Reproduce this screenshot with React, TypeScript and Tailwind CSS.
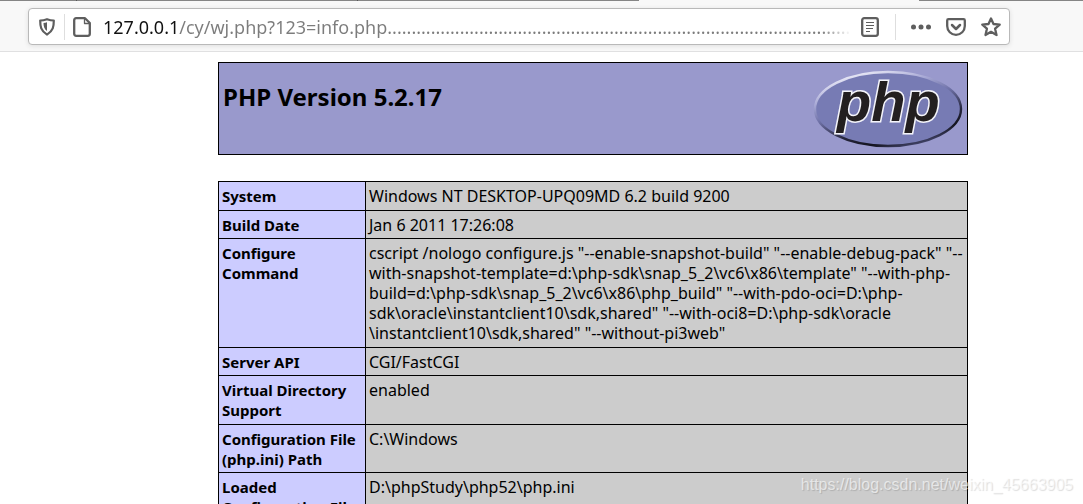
const rows: [string, string][] = [
  ["System", "Windows NT DESKTOP-UPQ09MD 6.2 build 9200"],
  ["Build Date", "Jan 6 2011 17:26:08"],
  [
    "Configure\nCommand",
    'cscript /nologo configure.js "--enable-snapshot-build" "--enable-debug-pack" "--\nwith-snapshot-template=d:\\php-sdk\\snap_5_2\\vc6\\x86\\template" "--with-php-\nbuild=d:\\php-sdk\\snap_5_2\\vc6\\x86\\php_build" "--with-pdo-oci=D:\\php-\nsdk\\oracle\\instantclient10\\sdk,shared" "--with-oci8=D:\\php-sdk\\oracle\n\\instantclient10\\sdk,shared" "--without-pi3web"',
  ],
  ["Server API", "CGI/FastCGI"],
  ["Virtual Directory\nSupport", "enabled"],
  ["Configuration File\n(php.ini) Path", "C:\\Windows"],
  ["Loaded\nConfiguration File", "D:\\phpStudy\\php52\\php.ini"],
];

const url = "127.0.0.1/cy/wj.php?123=info.php" + ".".repeat(160);

function PhpLogo() {
  return (
    <svg width="150" height="80" viewBox="0 0 150 80" role="img" aria-label="PHP logo">
      <defs>
        <linearGradient id="rim" x1="0.25" y1="0" x2="0.75" y2="1">
          <stop offset="0" stopColor="#f0f0fa" />
          <stop offset="0.25" stopColor="#a9aad6" />
          <stop offset="0.45" stopColor="#6f72a8" />
          <stop offset="0.7" stopColor="#26263c" />
          <stop offset="0.85" stopColor="#14141f" />
          <stop offset="1" stopColor="#50527f" />
        </linearGradient>
      </defs>
      <ellipse cx="75" cy="40" rx="73" ry="37" fill="#777bb4" stroke="url(#rim)" strokeWidth="2.400" />
      <text
        x="24"
        y="52"
        className="font-['Liberation_Sans',sans-serif] text-[56px] font-bold italic"
        fill="#231f20"
        stroke="#f4f4fa"
        strokeWidth="3"
        strokeLinejoin="miter"
        paintOrder="stroke"
      >
        php
      </text>
    </svg>
  );
}

function Toolbar() {
  return (
    <header className="border-b border-[#e0e0e1] bg-[#f8f8f8]">
      <div className="flex h-px">
        <div className="w-[76px] bg-[#858585]" />
        <div className="w-px bg-[#555]" />
        <div className="w-[280px] bg-[#858585]" />
        <div className="w-px bg-[#555]" />
        <div className="w-[281px] bg-[#858585]" />
        <div className="w-[280px]" />
        <div className="flex-1 bg-[#858585]" />
      </div>
      <div className="pt-[7px] pr-[73px] pb-[6px] pl-7">
        <div className="flex h-[37px] items-center rounded-sm border border-[#b9b9b9] bg-white pr-2 text-[#5e5e5e] shadow-[0_1px_5px_rgba(0,0,0,0.1)]">
          <button aria-label="Tracking protection" className="flex w-[35px] justify-center">
            <svg width="18" height="20" viewBox="0 0 18 20" fill="none" stroke="currentColor">
              <path d="M9 2.2C6.8 2.9 4.6 3.4 2.2 3.5C2.2 9.5 2.8 14 9 17.6C15.200 14 15.8 9.500 15.8 3.500C13.4 3.400 11.200 2.900 9 2.200Z" strokeWidth="2.200" strokeLinejoin="round" />
              <path d="M9 5.200V14C6.200 12 5.600 9.500 5.500 6C6.800 5.800 8 5.500 9 5.200Z" fill="currentColor" stroke="none" />
            </svg>
          </button>
          <div className="h-[26px] w-px bg-[#dedede]" />
          <button aria-label="Site information" className="flex w-[34px] justify-center">
            <svg width="18" height="20" viewBox="0 0 18 20" fill="none" stroke="currentColor" strokeWidth="2.300" strokeLinejoin="round">
              <path d="M3.200 1.200H12L16.800 6V16.800Q16.800 18.800 14.800 18.800H3.200Q1.200 18.800 1.200 16.800V3.200Q1.200 1.200 3.200 1.200Z" />
              <path d="M11.500 1.500V6.500H16.500" strokeWidth="1.300" />
            </svg>
          </button>
          <input
            aria-label="Address"
            defaultValue={url}
            className="ml-1 h-[34px] min-w-0 flex-1 bg-clip-text font-['Noto_Sans',sans-serif] text-lg text-transparent outline-none [background-image:linear-gradient(to_right,#111_76px,#7c7c7c_76px,#7c7c7c_calc(100%-30px),#7c7c7c00)]"
          />
          <button aria-label="Reader view" className="ml-[10px] flex w-[18px]">
            <svg width="18" height="20" viewBox="0 0 18 20" fill="none" stroke="currentColor">
              <rect x="1.200" y="1.200" width="15.600" height="17.600" rx="2" strokeWidth="2.300" />
              <path d="M5 5.500H13M5 8.500H13M5 11.500H12M5 14.500H9" strokeWidth="1.200" />
            </svg>
          </button>
          <div className="ml-4 h-[26px] w-px bg-[#dedede]" />
          <button aria-label="Page actions" className="ml-[15px] flex">
            <svg width="20" height="20" viewBox="0 0 20 20" fill="currentColor">
              <circle cx="2.500" cy="10" r="2.500" />
              <circle cx="10" cy="10" r="2.500" />
              <circle cx="17.500" cy="10" r="2.500" />
            </svg>
          </button>
          <button aria-label="Save to Pocket" className="ml-[15px] flex">
            <svg width="20" height="20" viewBox="0 0 20 20" fill="none" stroke="currentColor" strokeWidth="2.300" strokeLinecap="round" strokeLinejoin="round">
              <path d="M2.500 2.200H17.500Q18.800 2.200 18.800 3.500V9A8.800 8.800 0 0 1 1.200 9V3.500Q1.200 2.200 2.500 2.200Z" />
              <path d="M6 8L10 12L14 8" strokeWidth="2.500" />
            </svg>
          </button>
          <button aria-label="Bookmark this page" className="ml-[15px] flex">
            <svg width="20" height="20" viewBox="0 0 20 20" fill="none" stroke="currentColor" strokeWidth="2.300" strokeLinejoin="round">
              <path d="M10 1.500L12.500 7L18.700 7.600L14.100 11.700L15.500 18L10 14.800L4.500 18L5.900 11.700L1.300 7.600L7.500 7Z" />
            </svg>
          </button>
        </div>
      </div>
    </header>
  );
}

export default function App() {
  return (
    <div className="relative h-screen overflow-hidden bg-white font-['Noto_Sans',sans-serif] text-black">
      <Toolbar />
      <main className="pt-[10px] pr-[115px] pl-[218px]">
        <section className="flex h-[93px] items-start justify-between border border-black bg-[#9999cc] pt-[6px] pr-1 pl-1">
          <h1 className="pt-[10px] text-2xl leading-9 font-bold">PHP Version 5.2.17</h1>
          <a href="http://www.php.net/">
            <PhpLogo />
          </a>
        </section>
        <table className="mt-[26px] w-full table-fixed border-collapse text-[15px] leading-5">
          <colgroup>
            <col className="w-[147px]" />
            <col />
          </colgroup>
          <tbody>
            {rows.map(([name, value]) => (
              <tr key={name} className="group align-top">
                <th scope="row" className="border border-black bg-[#ccccff] px-[3px] pt-1 pb-1 text-left align-top font-bold whitespace-pre group-even:pb-[3px]">
                  {name}
                </th>
                <td className="border border-black bg-[#cccccc] px-[3px] pt-1 pb-1 text-base leading-5 whitespace-pre group-even:pb-[3px]">
                  {value}
                </td>
              </tr>
            ))}
          </tbody>
        </table>
      </main>
      <p className="absolute right-[10px] bottom-[9px] font-['Liberation_Sans',sans-serif] text-base leading-5 text-white/60 [text-shadow:1px_1px_1px_rgba(0,0,0,0.14)]">
        https://blog.csdn.net/weixin_45663905
      </p>
    </div>
  );
}
